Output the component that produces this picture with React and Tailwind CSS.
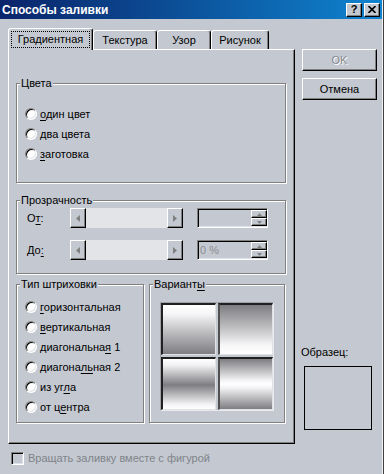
import React from "react";

function U({ children }) {
  return <span className="underline decoration-1 underline-offset-[2px]">{children}</span>;
}

const raised =
  "border border-t-white border-l-white border-r-black border-b-black shadow-[inset_-1px_-1px_0_#808080] bg-[#c4c8d0]";
const sunken =
  "border border-t-[#808080] border-l-[#808080] border-r-white border-b-white shadow-[inset_1px_1px_0_#000,inset_-1px_-1px_0_#dfe2e6]";

function Radio({ children }) {
  return (
    <div className="flex items-center h-[20px]">
      <span className="shrink-0 w-[12px] h-[12px] rounded-full bg-white border border-t-[#808080] border-l-[#808080] border-r-white border-b-white shadow-[inset_1px_1px_0_#000,inset_-1px_-1px_0_#dfe2e6]" />
      <span className="ml-[3px]">{children}</span>
    </div>
  );
}

function Group({ title, className = "", children }) {
  return (
    <fieldset
      className={
        "border border-[#808080] shadow-[inset_1px_1px_0_#fff,1px_1px_0_#fff] min-w-0 " + className
      }
    >
      <legend className="ml-[3px] px-[1px] leading-[13px] bg-[#c4c8d0]">{title}</legend>
      {children}
    </fieldset>
  );
}

function Arrow({ dir }) {
  return (
    <svg width="4" height="7" viewBox="0 0 4 7">
      {dir === "left" ? (
        <polygon points="4,0 0,3.5 4,7" fill="#808080" />
      ) : (
        <polygon points="0,0 4,3.5 0,7" fill="#808080" />
      )}
    </svg>
  );
}

function ScrollBar() {
  return (
    <div className="flex w-[113px] h-[20px] bg-[#e2e4e8]">
      <div className={raised + " w-[16px] h-full flex items-center justify-center"}>
        <Arrow dir="left" />
      </div>
      <div className="flex-1" />
      <div className={raised + " w-[16px] h-full flex items-center justify-center"}>
        <Arrow dir="right" />
      </div>
    </div>
  );
}

function SpinEdit({ value }) {
  return (
    <div className={sunken + " ml-[14px] w-[71px] h-[20px] flex bg-[#c4c8d0]"}>
      <div className="flex-1 pl-[2px] pt-[1px] leading-[16px] text-[#8a8e94]">{value}</div>
      <div className="w-[16px] flex flex-col mt-[1px] mb-[1px] mr-[0px]">
        <div className={raised + " flex-1 flex items-center justify-center"}>
          <svg width="5" height="3" viewBox="0 0 5 3">
            <polygon points="2.5,0 5,3 0,3" fill="#808080" />
          </svg>
        </div>
        <div className={raised + " flex-1 flex items-center justify-center"}>
          <svg width="5" height="3" viewBox="0 0 5 3">
            <polygon points="0,0 5,0 2.5,3" fill="#808080" />
          </svg>
        </div>
      </div>
    </div>
  );
}

function Tab({ w, children }) {
  return (
    <div
      className={
        "h-[19px] flex items-center justify-center border-t border-l border-r border-t-white border-l-white border-r-black rounded-t-[3px] shadow-[inset_-1px_0_0_#808080] " +
        w
      }
    >
      {children}
    </div>
  );
}

export default function App() {
  return (
    <div className="w-[384px] h-[474px] overflow-hidden bg-[#c4c8d0] text-black font-['Liberation_Sans',Arial,sans-serif] text-[11px] leading-[13px] border-r border-r-[#404040]">
      <div className="h-full border-r border-r-[#eef0f4] flex flex-col">
        {/* Title bar */}
        <div className="h-[19px] shrink-0 flex items-center justify-between pl-[2px] pr-[2px] bg-linear-to-r from-[#0a246a] to-[#1084d0]">
          <span className="text-white font-bold text-[12px] leading-[14px]">Способы заливки</span>
          <div className="flex gap-[2px]">
            <div className={raised + " w-[16px] h-[14px] flex items-center justify-center font-bold text-[11px] leading-[11px]"}>
              ?
            </div>
            <div className={raised + " w-[16px] h-[14px] flex items-center justify-center"}>
              <svg width="8" height="7" viewBox="0 0 8 7">
                <path d="M0.5 0 L7.5 7 M7.5 0 L0.5 7" stroke="#000" strokeWidth="1.6" />
              </svg>
            </div>
          </div>
        </div>

        <div className="flex pl-[8px] pt-[9px]">
          {/* Left column */}
          <div className="w-[287px] flex flex-col">
            <div className="flex items-end h-[21px]">
              <div className="relative z-10 w-[85px] h-[22px] -mb-px bg-[#c4c8d0] border-t border-l border-r border-t-white border-l-white border-r-black rounded-t-[3px] shadow-[inset_-1px_0_0_#808080] flex justify-center pt-[2px]">
                <div className="w-[79px] h-[17px] border border-dotted border-black flex items-center justify-center">
                  Градиентная
                </div>
              </div>
              <Tab w="w-[64px]">Текстура</Tab>
              <Tab w="w-[54px]">Узор</Tab>
              <Tab w="w-[58px]">Рисунок</Tab>
            </div>

            <div className="h-[395px] border border-t-white border-l-white border-r-black border-b-black shadow-[inset_-1px_-1px_0_#808080] pl-[7px] pt-[27px]">
              <Group title="Цвета" className="w-[270px]">
                <div className="pl-[8px] pt-[14px] pb-[18px]">
                  <Radio>
                    <U>о</U>дин цвет
                  </Radio>
                  <Radio>
                    <U>д</U>ва цвета
                  </Radio>
                  <Radio>
                    <U>з</U>аготовка
                  </Radio>
                </div>
              </Group>

              <Group title="Прозрачность" className="w-[270px] mt-[11px]">
                <div className="pl-[10px] pt-[1px] pb-[13px] flex flex-col gap-[12px]">
                  <div className="flex items-center h-[20px]">
                    <span className="w-[43px]">
                      О<U>т</U>:
                    </span>
                    <ScrollBar />
                    <SpinEdit value="" />
                  </div>
                  <div className="flex items-center h-[20px]">
                    <span className="w-[43px]">
                      До<U>:</U>
                    </span>
                    <ScrollBar />
                    <SpinEdit value="0 %" />
                  </div>
                </div>
              </Group>

              <div className="flex gap-[5px] mt-[4px]">
                <Group title="Тип штриховки" className="w-[128px]">
                  <div className="pl-[8px] pt-[6px] pb-[5px]">
                    <Radio>
                      <U>г</U>оризонтальная
                    </Radio>
                    <Radio>
                      <U>в</U>ертикальная
                    </Radio>
                    <Radio>
                      диагональна<U>я</U> 1
                    </Radio>
                    <Radio>
                      диагона<U>ль</U>ная 2
                    </Radio>
                    <Radio>
                      из уг<U>л</U>а
                    </Radio>
                    <Radio>
                      от ц<U>е</U>нтра
                    </Radio>
                  </div>
                </Group>
                <Group
                  title={
                    <span>
                      Вариант<U>ы</U>
                    </span>
                  }
                  className="w-[136px]"
                >
                  <div className="pl-[10px] pt-[11px]">
                    <div className="w-[114px] h-[109px] border border-t-[#9ea2a8] border-l-[#9ea2a8] border-r-[#e8eaee] border-b-[#e8eaee] grid grid-cols-[55px_55px] grid-rows-[52px_53px] gap-[2px] content-start">
                      <div className="border-t-2 border-l-2 border-t-[#202020] border-l-[#202020] border-r border-b border-r-[#e0e2e6] border-b-[#e0e2e6] bg-[linear-gradient(to_bottom,#ffffff_0%,#f6f6f8_18%,#bdbdc0_55%,#7e7e82_100%)]" />
                      <div className="border-t-2 border-l-2 border-t-[#202020] border-l-[#505050] border-r border-b border-r-[#e0e2e6] border-b-[#e0e2e6] bg-[linear-gradient(to_bottom,#7e7e82_0%,#bdbdc0_45%,#f6f6f8_82%,#ffffff_100%)]" />
                      <div className="border-t-2 border-l-2 border-t-[#202020] border-l-[#202020] border-r border-b border-r-[#e0e2e6] border-b-[#e0e2e6] bg-[linear-gradient(to_bottom,#ffffff_0%,#f2f2f4_12%,#7e7e82_52%,#f2f2f4_90%,#ffffff_100%)]" />
                      <div className="border-t-2 border-l-2 border-t-[#202020] border-l-[#505050] border-r border-b border-r-[#e0e2e6] border-b-[#e0e2e6] bg-[linear-gradient(to_bottom,#7e7e82_0%,#f2f2f4_42%,#ffffff_50%,#f2f2f4_58%,#7e7e82_100%)]" />
                    </div>
                  </div>
                </Group>
              </div>
            </div>

            <div className="mt-[8px] pl-[3px] flex items-center gap-[4px]">
              <span className={sunken + " w-[13px] h-[13px] bg-[#c4c8d0]"} />
              <span className="text-[#80848a]">Вращать заливку вместе с фигурой</span>
            </div>
          </div>

          {/* Right column */}
          <div className="ml-[7px] w-[75px] pt-[21px] flex flex-col">
            <div className={raised + " h-[22px] flex items-center justify-center text-[#868a90] [text-shadow:1px_1px_0_#fff]"}>
              OK
            </div>
            <div className={raised + " mt-[7px] h-[22px] flex items-center justify-center"}>Отмена</div>
            <div className="mt-[246px] -ml-[1px]">Образец:</div>
            <div className="mt-[7px] ml-[2px] w-[68px] h-[64px] border border-black" />
          </div>
        </div>
      </div>
    </div>
  );
}
